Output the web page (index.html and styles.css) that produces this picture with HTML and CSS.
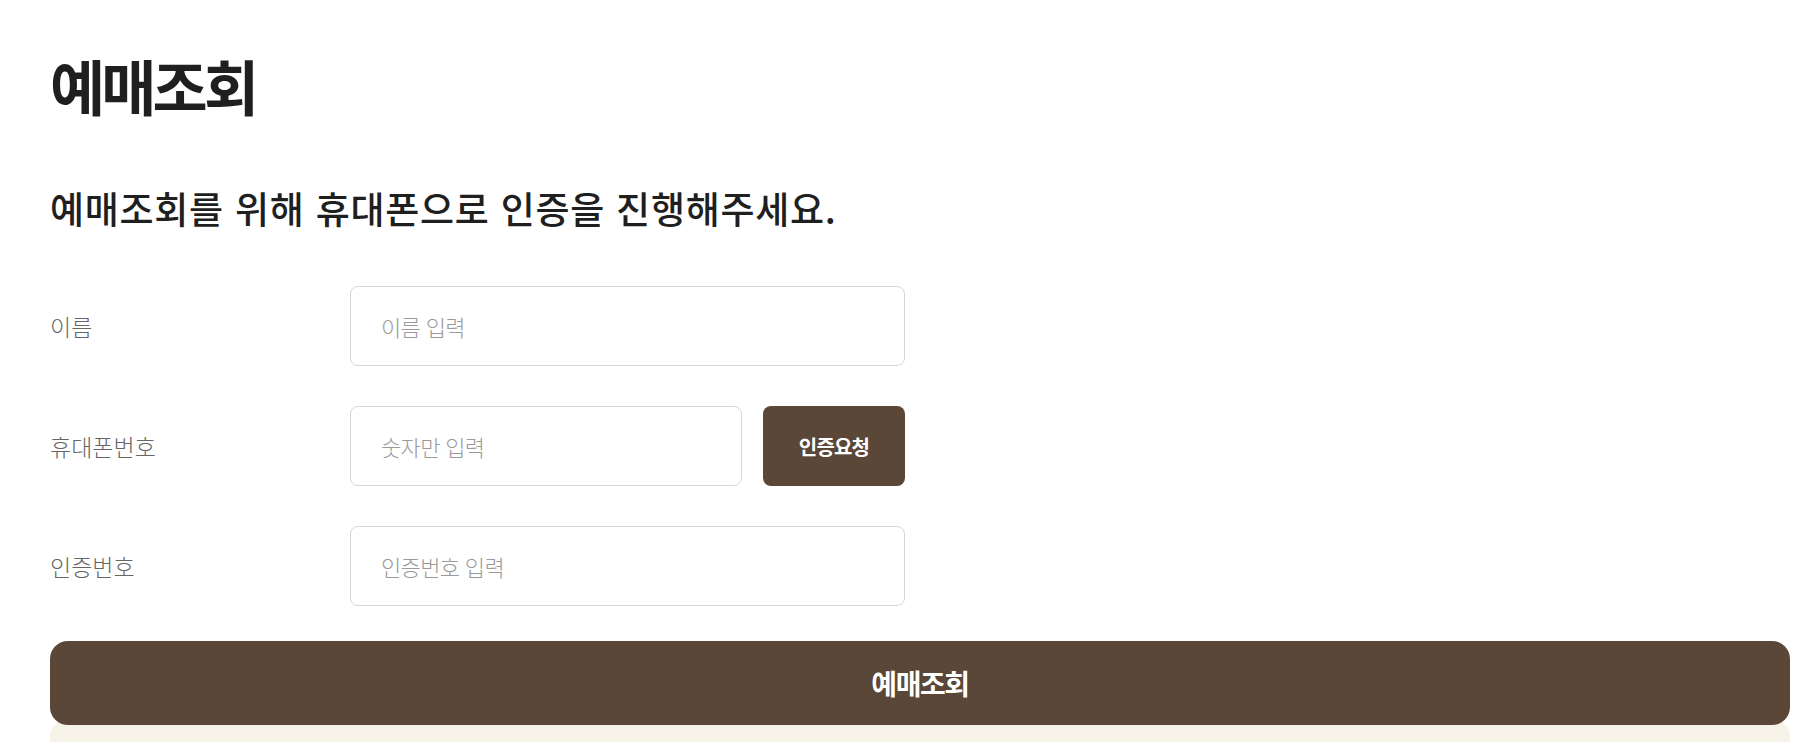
FILE: index.html
```html
<!DOCTYPE html>
<html lang="ko">
<head>
<meta charset="utf-8">
<title>예매조회</title>
<link rel="stylesheet" href="styles.css">
</head>
<body>
<main class="page">
  <h1 class="title">예매조회</h1>
  <p class="subtitle">예매조회를 위해 휴대폰으로 인증을 진행해주세요.</p>
  <form class="form">
    <div class="rows">
      <div class="row">
        <label class="label" for="name">이름</label>
        <div class="field">
          <input class="input" id="name" type="text" placeholder="이름 입력">
        </div>
      </div>
      <div class="row">
        <label class="label" for="phone">휴대폰번호</label>
        <div class="field">
          <input class="input input-short" id="phone" type="text" placeholder="숫자만 입력">
          <button class="btn-small" type="button">인증요청</button>
        </div>
      </div>
      <div class="row">
        <label class="label" for="code">인증번호</label>
        <div class="field">
          <input class="input" id="code" type="text" placeholder="인증번호 입력">
        </div>
      </div>
    </div>
    <button class="btn-main" type="button">예매조회</button>
    <div class="notice"></div>
  </form>
</main>
</body>
</html>
```
FILE: styles.css
```css
* { box-sizing: border-box; }
html, body { margin: 0; padding: 0; background: #fff; }
body {
  font-family: "Noto Sans CJK KR", "Noto Sans", sans-serif;
  color: #1f1f1f;
  overflow: hidden;
}
.page {
  width: 1790px;
  padding: 49px 0 0 50px;
}
.title {
  margin: 0;
  font-size: 60px;
  line-height: 72px;
  font-weight: 700;
  letter-spacing: -0.065em;
  color: #1f1f1f;
}
.subtitle {
  margin: 65px 0 0;
  font-size: 37px;
  line-height: 44px;
  font-weight: 500;
  letter-spacing: 0.02em;
  color: #1f1f1f;
}
.form {
  margin-top: 56px;
  display: flex;
  flex-direction: column;
}
.rows {
  display: flex;
  flex-direction: column;
  gap: 40px;
}
.row {
  display: flex;
  align-items: center;
  height: 80px;
}
.label {
  width: 300px;
  font-size: 23px;
  font-weight: 300;
  color: #666;
  letter-spacing: 0;
}
.field {
  display: flex;
  gap: 21px;
  width: 555px;
  height: 80px;
}
.input {
  flex: 1;
  height: 80px;
  border: 1px solid #d6d6d6;
  border-radius: 8px;
  padding: 0 30px;
  font-family: inherit;
  font-size: 22px;
  font-weight: 300;
  letter-spacing: -0.03em;
  color: #333;
  outline: none;
  background: #fff;
}
.input::placeholder { color: #9a9a9a; }
.input-short { flex: 0 0 392px; }
.btn-small {
  flex: 0 0 142px;
  height: 80px;
  border: 0;
  border-radius: 8px;
  background: #5a4738;
  color: #fff;
  font-family: inherit;
  font-size: 20px;
  font-weight: 700;
  letter-spacing: -0.04em;
}
.btn-main {
  position: relative;
  z-index: 1;
  margin-top: 35px;
  width: 1740px;
  height: 84px;
  border: 0;
  border-radius: 18px;
  background: #5a4738;
  color: #fff;
  font-family: inherit;
  font-size: 28px;
  font-weight: 700;
  letter-spacing: -0.05em;
}
.notice {
  width: 1740px;
  height: 120px;
  margin-top: -6px;
  border-radius: 18px;
  background: #f7f3e8;
}
```
